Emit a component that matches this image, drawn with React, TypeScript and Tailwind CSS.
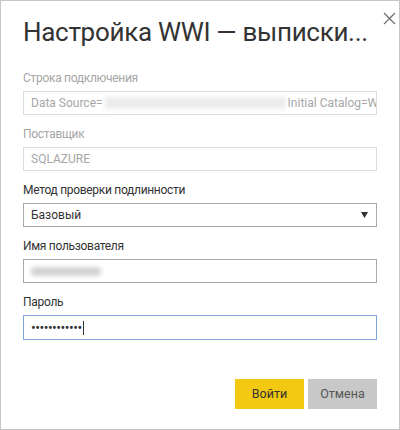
import React from "react";

const font = { fontFamily: 'Roboto, "Noto Sans", sans-serif' };

export default function App() {
  return (
    <div
      className="w-[400px] h-[430px] bg-white border border-[#c6c6c6] relative overflow-hidden text-[#333]"
      style={font}
    >
      <button className="absolute left-[382px] top-[11px] w-[13px] h-[13px]">
        <svg width="13" height="13" viewBox="0 0 13 13">
          <path d="M1 1 L12 12 M12 1 L1 12" stroke="#6a6a6a" strokeWidth="1.2" fill="none" />
        </svg>
      </button>
      <div className="pl-[22px] pr-[22px]">
        <h1 className="mt-[12px] text-[26px] leading-[38px] font-normal text-[#333] whitespace-nowrap tracking-[-0.3px]">
          Настройка WWI — выписки...
        </h1>

        <div className="mt-[19px] text-[12px] leading-[16px] tracking-[-0.3px] text-[#a6a6a6]">Строка подключения</div>
        <div className="mt-[5px] h-[24px] border border-[#dcdcdc] flex items-center pl-[7px] overflow-hidden whitespace-nowrap text-[12px] text-[#a6a6a6]">
          <span className="shrink-0">Data Source=</span>
          <span className="shrink-0 inline-block w-[181px] h-[12px] bg-[#ececec] blur-[2px] mx-[2px]" />
          <span className="shrink-0">Initial Catalog=WideWorldImporters</span>
        </div>

        <div className="mt-[11px] text-[12px] leading-[16px] tracking-[-0.3px] text-[#a6a6a6]">Поставщик</div>
        <div className="mt-[5px] h-[24px] border border-[#dcdcdc] flex items-center pl-[7px] text-[12px] text-[#a6a6a6]">
          SQLAZURE
        </div>

        <div className="mt-[11px] text-[12px] leading-[16px] tracking-[-0.3px] text-[#333]">Метод проверки подлинности</div>
        <div className="mt-[5px] h-[24px] border border-[#a9a9a9] flex items-center justify-between pl-[7px] pr-[8px] text-[12px] text-[#333]">
          <span>Базовый</span>
          <svg width="7" height="6" viewBox="0 0 7 6">
            <path d="M0 0 H7 L3.5 6 Z" fill="#333" />
          </svg>
        </div>

        <div className="mt-[11px] text-[12px] leading-[16px] tracking-[-0.3px] text-[#333]">Имя пользователя</div>
        <div className="mt-[5px] h-[24px] border border-[#a9a9a9] flex items-center pl-[7px]">
          <span className="inline-block w-[70px] h-[9px] bg-[#d2d2d2] blur-[2px] rounded" />
        </div>

        <div className="mt-[11px] text-[12px] leading-[16px] tracking-[-0.3px] text-[#333]">Пароль</div>
        <div className="mt-[5px] h-[25px] border border-[#7da2dd] flex items-center pl-[7px] text-[#333]">
          <span className="text-[14px] tracking-[-0.5px] leading-none">••••••••••••</span>
          <span className="inline-block w-[1px] h-[14px] bg-[#333] ml-[1px]" />
        </div>

        <div className="mt-[39px] flex justify-end gap-[4px]">
          <button className="w-[69px] h-[30px] bg-[#f2c811] text-[12.5px] text-[#333]">Войти</button>
          <button className="w-[69px] h-[30px] bg-[#c8c8c8] text-[12.5px] text-[#555]">Отмена</button>
        </div>
      </div>
    </div>
  );
}
